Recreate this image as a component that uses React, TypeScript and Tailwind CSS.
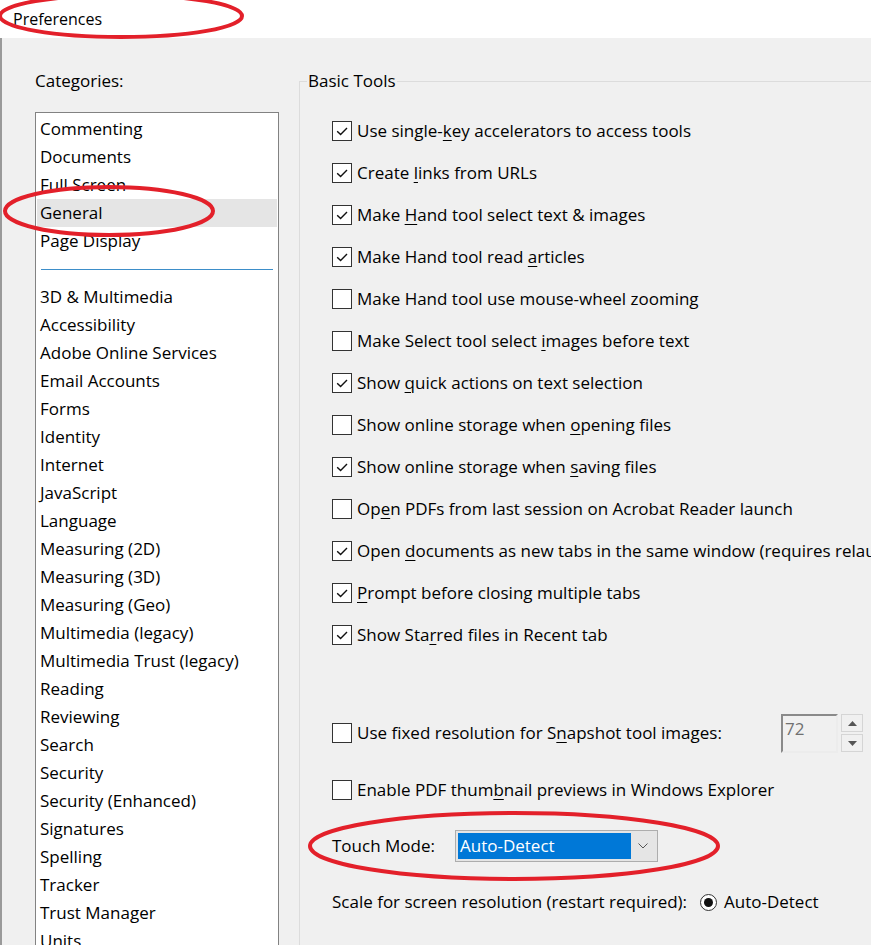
import React from "react";

const F = { fontFamily: '"Open Sans", "Noto Sans", sans-serif' };

const catsTop = ["Commenting", "Documents", "Full Screen", "General", "Page Display"];
const catsBottom = [
  "3D & Multimedia",
  "Accessibility",
  "Adobe Online Services",
  "Email Accounts",
  "Forms",
  "Identity",
  "Internet",
  "JavaScript",
  "Language",
  "Measuring (2D)",
  "Measuring (3D)",
  "Measuring (Geo)",
  "Multimedia (legacy)",
  "Multimedia Trust (legacy)",
  "Reading",
  "Reviewing",
  "Search",
  "Security",
  "Security (Enhanced)",
  "Signatures",
  "Spelling",
  "Tracker",
  "Trust Manager",
  "Units",
];

type Opt = { pre: string; u: string; post: string; checked: boolean };
const opts: Opt[] = [
  { pre: "Use single-", u: "k", post: "ey accelerators to access tools", checked: true },
  { pre: "Create ", u: "l", post: "inks from URLs", checked: true },
  { pre: "Make ", u: "H", post: "and tool select text & images", checked: true },
  { pre: "Make Hand tool read ", u: "a", post: "rticles", checked: true },
  { pre: "Make Hand tool use mouse-wheel zooming", u: "", post: "", checked: false },
  { pre: "Make Select tool select ", u: "i", post: "mages before text", checked: false },
  { pre: "Show ", u: "q", post: "uick actions on text selection", checked: true },
  { pre: "Show online storage when ", u: "o", post: "pening files", checked: false },
  { pre: "Show online storage when ", u: "s", post: "aving files", checked: true },
  { pre: "Op", u: "e", post: "n PDFs from last session on Acrobat Reader launch", checked: false },
  { pre: "Open ", u: "d", post: "ocuments as new tabs in the same window (requires relaunch)", checked: true },
  { pre: "", u: "P", post: "rompt before closing multiple tabs", checked: true },
  { pre: "Show Sta", u: "r", post: "red files in Recent tab", checked: true },
];

function Box({ checked }: { checked: boolean }) {
  return (
    <div className="w-[20px] h-[20px] border border-[#333333] bg-white flex items-center justify-center shrink-0">
      {checked && (
        <svg width="14" height="14" viewBox="0 0 14 14">
          <path d="M2.2 7.2 L5.6 10.6 L12 4" fill="none" stroke="#111" strokeWidth="1.4" />
        </svg>
      )}
    </div>
  );
}

function Label({ o }: { o: Opt }) {
  return (
    <span className="whitespace-nowrap">
      {o.pre}
      {o.u && <span className="underline underline-offset-[3px] decoration-1">{o.u}</span>}
      {o.post}
    </span>
  );
}

export default function App() {
  return (
    <div
      className="relative w-[871px] h-[945px] overflow-hidden bg-[#f0f0f0] text-[17px] text-black"
      style={F}
    >
      <div className="h-[38px] bg-white flex items-center pl-[13px] text-[16px]">Preferences</div>
      <div className="flex h-[907px] border-l-2 border-[#9a9a9a]">
        {/* left column */}
        <div className="w-[297px] shrink-0 pl-[33px] pt-[31px]">
          <div className="h-[24px] leading-[24px]">Categories:</div>
          <div className="mt-[19px] w-[244px] h-[900px] border border-[#828282] bg-white px-[1px] pt-[2px]">
            {catsTop.map((c) => (
              <div
                key={c}
                className={`h-[28px] leading-[28px] pl-[3px] whitespace-nowrap ${
                  c === "General" ? "bg-[#e5e5e5]" : ""
                }`}
              >
                {c}
              </div>
            ))}
            <div className="h-[28px] flex items-center px-[4px]">
              <div className="h-[1px] w-full bg-[#3d8ec9]" />
            </div>
            {catsBottom.map((c) => (
              <div key={c} className="h-[28px] leading-[28px] pl-[3px] whitespace-nowrap">
                {c}
              </div>
            ))}
          </div>
        </div>

        {/* right column */}
        <fieldset className="flex-1 border-l border-t border-[#dcdcdc] mt-[31px] min-w-0 w-[700px]">
          <legend className="ml-[7px] px-[1px] h-[24px] leading-[24px]">Basic Tools</legend>
          <div className="pt-[17px] pl-[32px]">
            {opts.map((o, i) => (
              <div key={i} className="h-[42px] flex items-center gap-[5px]">
                <Box checked={o.checked} />
                <Label o={o} />
              </div>
            ))}
            <div className="h-[56px]" />
            <div className="h-[42px] flex items-center gap-[5px]">
              <Box checked={false} />
              <div className="w-[419px] whitespace-nowrap">
                Use fixed resolution for S<span className="underline underline-offset-[3px]">n</span>apshot tool images:
              </div>
              <div className="flex items-center gap-[3px]">
                <div className="w-[57px] h-[39px] border-2 border-t-[#8a8a8a] border-l-[#8a8a8a] border-r-[#ececec] border-b-[#ececec] bg-[#f0f0f0] text-[#707070] pl-[2px] leading-[26px]">
                  72
                </div>
                <div className="flex flex-col gap-[2px]">
                  <div className="w-[22px] h-[18px] border border-[#d5d5d5] flex items-center justify-center">
                    <svg width="9" height="5" viewBox="0 0 9 5">
                      <path d="M0 5 L4.5 0 L9 5 Z" fill="#555" />
                    </svg>
                  </div>
                  <div className="w-[22px] h-[18px] border border-[#d5d5d5] flex items-center justify-center">
                    <svg width="9" height="5" viewBox="0 0 9 5">
                      <path d="M0 0 L4.5 5 L9 0 Z" fill="#555" />
                    </svg>
                  </div>
                </div>
              </div>
            </div>
            <div className="h-[15px]" />
            <div className="h-[42px] flex items-center gap-[5px]">
              <Box checked={false} />
              <span className="whitespace-nowrap">
                Enable PDF thum<span className="underline underline-offset-[3px]">b</span>nail previews in Windows Explorer
              </span>
            </div>
            <div className="h-[14px]" />
            <div className="h-[42px] flex items-center">
              <div className="w-[123px] whitespace-nowrap">Touch Mode:</div>
              <div className="w-[203px] h-[32px] border border-[#adadad] bg-[#e5e5e5] flex items-center p-[2px]">
                <div className="w-[173px] h-full bg-[#0078d7] text-white pl-[2px] leading-[26px] whitespace-nowrap">
                  Auto-Detect
                </div>
                <div className="flex-1 flex items-center justify-center">
                  <svg width="10" height="6" viewBox="0 0 10 6">
                    <path d="M0.5 0.5 L5 5 L9.5 0.5" fill="none" stroke="#555" strokeWidth="1" />
                  </svg>
                </div>
              </div>
            </div>
            <div className="h-[14px]" />
            <div className="h-[42px] flex items-center">
              <div className="w-[368px] whitespace-nowrap">Scale for screen resolution (restart required):</div>
              <div className="w-[17px] h-[17px] rounded-full border border-[#333] bg-white flex items-center justify-center">
                <div className="w-[9px] h-[9px] rounded-full bg-[#111]" />
              </div>
              <span className="ml-[7px]">Auto-Detect</span>
            </div>
          </div>
        </fieldset>
      </div>

      {/* red annotation ellipses */}
      <svg className="absolute left-0 top-0 pointer-events-none" width="871" height="945">
        <ellipse cx="121" cy="16" rx="121" ry="21" fill="none" stroke="#e3202a" strokeWidth="4" />
        <ellipse cx="109" cy="211" rx="104" ry="24" fill="none" stroke="#e3202a" strokeWidth="4" />
        <ellipse cx="514" cy="846" rx="204" ry="33" fill="none" stroke="#e3202a" strokeWidth="4" />
      </svg>
    </div>
  );
}
